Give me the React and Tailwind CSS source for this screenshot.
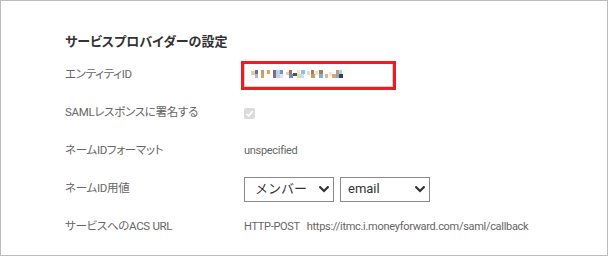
import { useState } from 'react';

const mosaic = [
  // [x, y, w, h, color] relative to the mosaic box
  [0, 1, 4, 4, '#e9c9a0'], [4, 0, 3, 4, '#6a6a9c'], [4, 4, 3, 4, '#b9b0c9'],
  [10, 0, 3, 4, '#c79a68'], [10, 4, 3, 4, '#d2a06e'], [16, 0, 3, 4, '#d4a36a'],
  [22, 0, 3, 4, '#7a6a8c'], [22, 4, 3, 4, '#8c6c8a'], [25, 0, 4, 4, '#a9d8f0'],
  [25, 4, 4, 4, '#c7d0e6'], [29, 0, 3, 4, '#8090b8'], [29, 4, 3, 4, '#dbe4f2'],
  [35, 2, 3, 3, '#e3d0a8'], [38, 0, 3, 4, '#b07050'], [38, 4, 4, 4, '#6890c0'],
  [42, 3, 4, 3, '#50506a'], [46, 0, 3, 4, '#f0e6c0'], [46, 4, 4, 4, '#e8d8a8'],
  [50, 0, 4, 4, '#8ec0d8'], [50, 4, 3, 4, '#b8e4f4'], [56, 1, 3, 4, '#c8e8f0'],
  [60, 0, 3, 4, '#a87a50'], [60, 4, 4, 4, '#d09860'], [64, 1, 3, 4, '#f2e2c0'],
  [68, 0, 4, 4, '#b07a52'], [68, 4, 4, 4, '#7ab0e0'], [74, 4, 3, 4, '#e0b888'],
  [78, 2, 3, 4, '#f0e8d0'], [81, 4, 4, 4, '#d8a878'], [85, 0, 3, 4, '#c89a70'],
  [85, 4, 3, 4, '#7aa8d8'], [88, 0, 3, 4, '#a8d0f0'], [88, 4, 4, 4, '#404040'],
];

function Chevron() {
  return (
    <svg width="10" height="7" viewBox="0 0 10 7" className="pointer-events-none absolute right-[5px] top-[9px]">
      <path d="M1.2 1.2 L5 5 L8.8 1.2" fill="none" stroke="#333" strokeWidth="2.2" strokeLinecap="square" />
    </svg>
  );
}

function Select({ value, options, onChange, pad }) {
  return (
    <div className="relative w-[90px] h-[25px]">
      <select
        value={value}
        onChange={(e) => onChange(e.target.value)}
        className={`appearance-none w-full h-full border border-[#8a8a8a] bg-white text-[13px] text-[#333] outline-none ${pad}`}
      >
        {options.map((o) => <option key={o} value={o}>{o}</option>)}
      </select>
      <Chevron />
    </div>
  );
}

function Row({ label, children }) {
  return (
    <div className="flex items-center h-[38px]">
      <div className="w-[179px] text-[11.5px] tracking-[-0.3px] text-[#666] [font-feature-settings:'palt']">{label}</div>
      <div className="flex items-center text-[11px] tracking-[-0.3px] text-[#666]">{children}</div>
    </div>
  );
}

export default function App() {
  const [role, setRole] = useState('メンバー');
  const [attr, setAttr] = useState('email');

  return (
    <div className="w-[609px] h-[257px] bg-white font-['Roboto','Noto_Sans_CJK_JP',sans-serif]">
      <div className="w-[608px] h-[256px] border border-[#bdbdbd] pl-[64px] pt-[31px]">
        <h2 className="h-[20px] leading-[20px] mb-[4px] text-[13px] font-bold text-[#333] [font-feature-settings:'palt']">
          サービスプロバイダーの設定
        </h2>

        <Row label="エンティティID">
          <div className="-ml-[3px] border-[3px] border-[#ec1c24]">
            <div className="relative w-[149px] h-[23px] border border-[#d0d0d0] border-t-0 bg-white">
              <svg width="92" height="8" className="absolute left-[6px] top-[6px]">
                {mosaic.map(([x, y, w, h, c], i) => (
                  <rect key={i} x={x} y={y} width={w} height={h} fill={c} />
                ))}
              </svg>
            </div>
          </div>
        </Row>

        <Row label="SAMLレスポンスに署名する">
          <div className="w-[11px] h-[11px] rounded-[2px] bg-[#dcdcdc] flex items-center justify-center">
            <svg width="9" height="9" viewBox="0 0 9 9">
              <path d="M1.5 4.8 L3.6 6.8 L7.6 2.2" fill="none" stroke="#fff" strokeWidth="1.6" />
            </svg>
          </div>
        </Row>

        <Row label="ネームIDフォーマット">
          <span>unspecified</span>
        </Row>

        <Row label="ネームID用値">
          <div className="flex gap-[6px] tracking-normal">
            <Select value={role} options={['メンバー', '管理者']} onChange={setRole} pad="pl-[10px]" />
            <Select value={attr} options={['email', 'name']} onChange={setAttr} pad="pl-[7px]" />
          </div>
        </Row>

        <Row label="サービスへのACS URL">
          <span>HTTP-POST</span>
          <span className="ml-[7px]">https://itmc.i.moneyforward.com/saml/callback</span>
        </Row>
      </div>
    </div>
  );
}
